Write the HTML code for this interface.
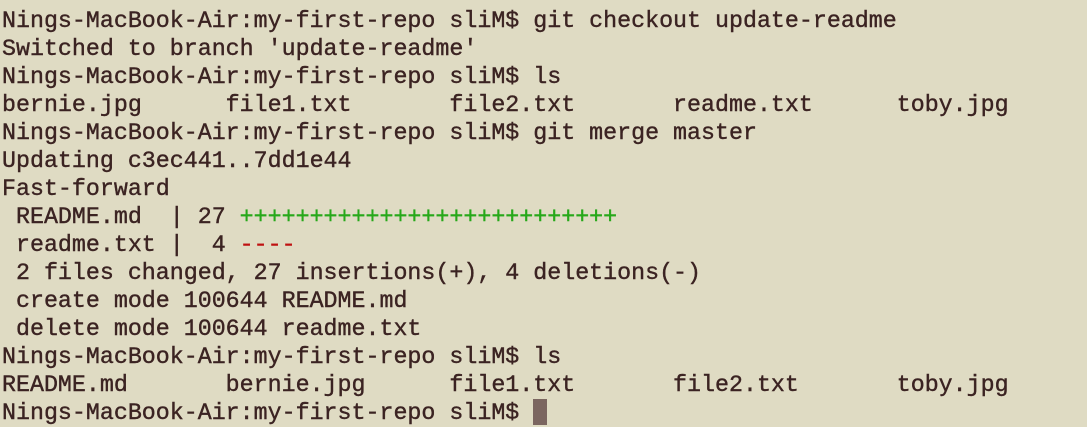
<!DOCTYPE html>
<html><head><style>
html,body{margin:0;padding:0;background:#dfdbc3;width:1087px;height:427px;overflow:hidden}
pre{margin:0;position:absolute;left:2px;top:7px;font-family:"Liberation Mono",monospace;font-size:23.3px;line-height:28px;color:#3b2322;white-space:pre;-webkit-text-stroke:0.4px #3b2322}
.g{color:#27a81a;-webkit-text-stroke:0.4px #27a81a}.r{color:#bf1111;-webkit-text-stroke:0.4px #bf1111}
.c{display:inline-block;width:14px;height:26px;background:#7b6660;vertical-align:-6px;-webkit-text-stroke:0}
</style></head><body>
<pre>Nings-MacBook-Air:my-first-repo sliM$ git checkout update-readme
Switched to branch 'update-readme'
Nings-MacBook-Air:my-first-repo sliM$ ls
bernie.jpg      file1.txt       file2.txt       readme.txt      toby.jpg
Nings-MacBook-Air:my-first-repo sliM$ git merge master
Updating c3ec441..7dd1e44
Fast-forward
 README.md  | 27 <span class="g">+++++++++++++++++++++++++++</span>
 readme.txt |  4 <span class="r">----</span>
 2 files changed, 27 insertions(+), 4 deletions(-)
 create mode 100644 README.md
 delete mode 100644 readme.txt
Nings-MacBook-Air:my-first-repo sliM$ ls
README.md       bernie.jpg      file1.txt       file2.txt       toby.jpg
Nings-MacBook-Air:my-first-repo sliM$ <span class="c"></span></pre>
</body></html>
